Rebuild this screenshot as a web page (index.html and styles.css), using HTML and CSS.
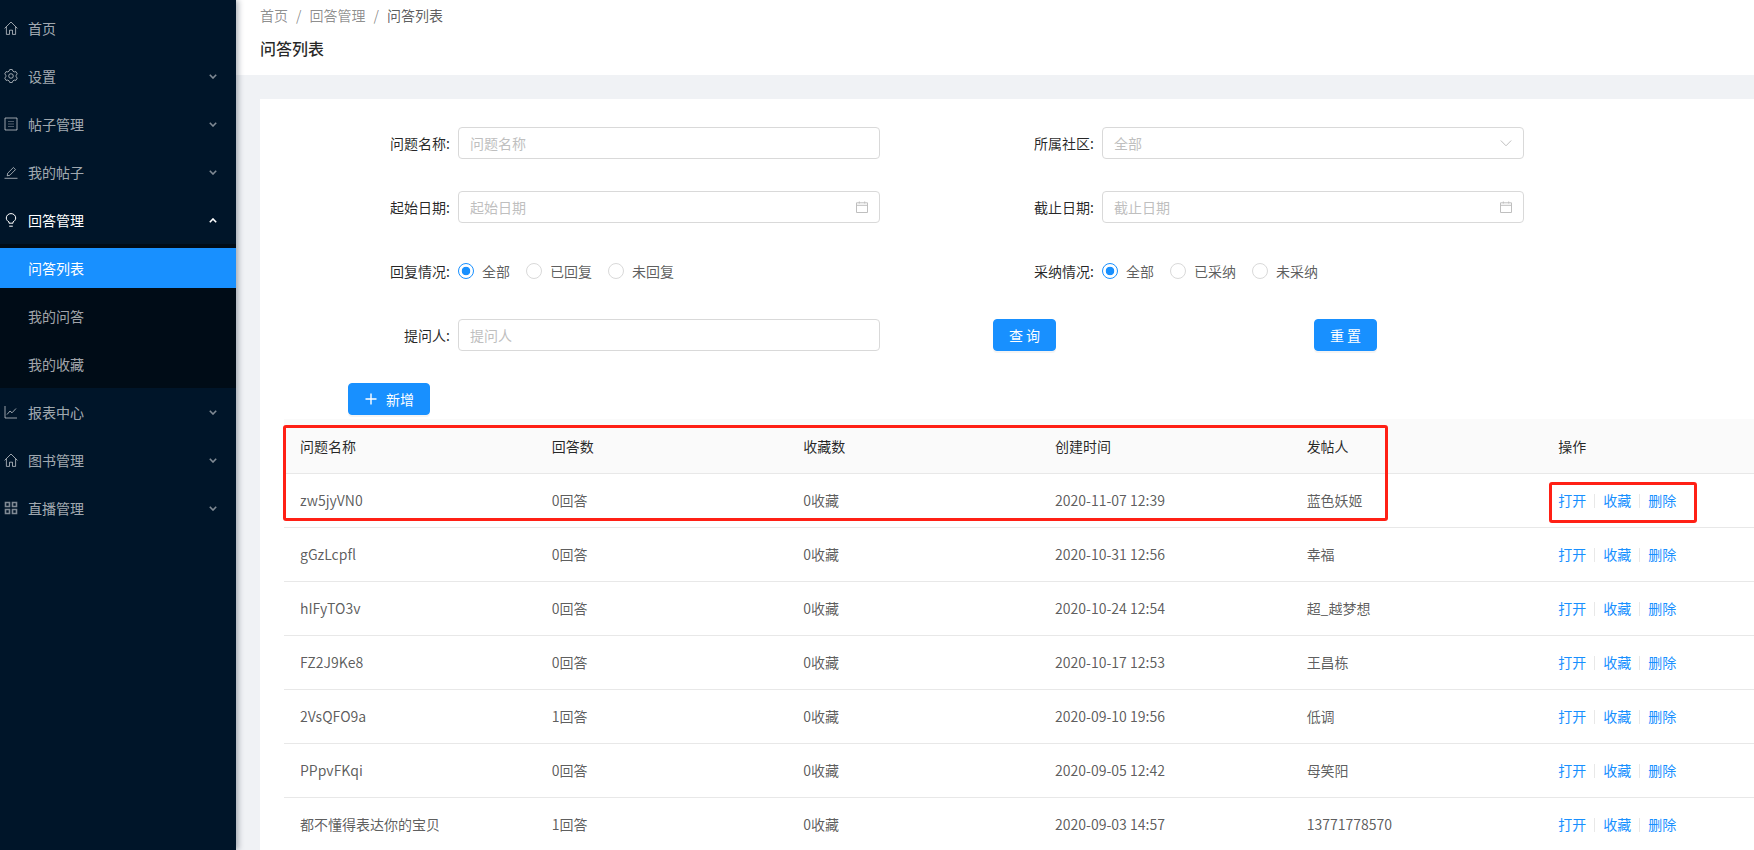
FILE: index.html
```html
<!DOCTYPE html>
<html lang="zh-CN">
<head>
  <meta charset="UTF-8">
  <meta name="viewport" content="width=device-width, initial-scale=1.0">
  <title>问答列表</title>
  <link rel="stylesheet" href="styles.css">
</head>
<body>
  <div class="layout">
    <!-- Sidebar -->
    <div class="sidebar">
      <div class="menu-item">
        <svg class="menu-icon" viewBox="0 0 14 14"><path d="M.6 7.4 7 1l6.4 6.4M2.4 5.8v7.6h3.1V9.2h3v4.2h3.1V5.8"/></svg>
        <span>首页</span>
      </div>
      <div class="menu-item">
        <svg class="menu-icon" viewBox="0 0 14 14"><path d="M5.74.52h2.52l.69 1.66 1.25.72 1.78-.23 1.26 2.18-1.09 1.43v1.44l1.09 1.43-1.26 2.18-1.78-.23-1.25.72-.69 1.66H5.74l-.69-1.66-1.25-.72-1.78.23L.76 9.15l1.09-1.43V6.28L.76 4.85l1.26-2.18 1.78.23 1.25-.72z"/><circle cx="7" cy="7" r="2.3"/></svg>
        <span>设置</span>
        <svg class="menu-arrow" viewBox="0 0 8 5"><path d="M.8.8 4 4l3.2-3.2"/></svg>
      </div>
      <div class="menu-item">
        <svg class="menu-icon" viewBox="0 0 14 14"><path d="M1 1h12v12H1z"/><path class="dim" d="M4 4.5h6M4 7h6M4 9.5h6"/></svg>
        <span>帖子管理</span>
        <svg class="menu-arrow" viewBox="0 0 8 5"><path d="M.8.8 4 4l3.2-3.2"/></svg>
      </div>
      <div class="menu-item">
        <svg class="menu-icon" viewBox="0 0 14 14"><path d="M.5 13.3h13M3.2 10.8l.5-2.6L9.4 2.5l2.1 2.1-5.7 5.7z"/></svg>
        <span>我的帖子</span>
        <svg class="menu-arrow" viewBox="0 0 8 5"><path d="M.8.8 4 4l3.2-3.2"/></svg>
      </div>
      <div class="menu-item menu-open">
        <svg class="menu-icon" viewBox="0 0 14 14"><path d="M5 10.2V8.9C3.4 8.100 2.300 6.700 2.300 5 2.300 2.500 4.400.6 7 .6s4.700 1.900 4.700 4.400c0 1.700-1.100 3.100-2.700 3.900v1.300zM5.200 13.200h3.600"/></svg>
        <span>回答管理</span>
        <svg class="menu-arrow" viewBox="0 0 8 5"><path d="M.8 4.200 4 1l3.200 3.200"/></svg>
      </div>
      <div class="submenu">
        <div class="submenu-item active">问答列表</div>
        <div class="submenu-item">我的问答</div>
        <div class="submenu-item">我的收藏</div>
      </div>
      <div class="menu-item">
        <svg class="menu-icon" viewBox="0 0 14 14"><path d="M1 1v12h12M3 9.500l3-3.500 2 1.800 4-4.300"/></svg>
        <span>报表中心</span>
        <svg class="menu-arrow" viewBox="0 0 8 5"><path d="M.8.8 4 4l3.200-3.200"/></svg>
      </div>
      <div class="menu-item">
        <svg class="menu-icon" viewBox="0 0 14 14"><path d="M.6 7.400 7 1l6.400 6.400M2.400 5.800v7.600h3.100V9.200h3v4.200h3.100V5.800"/></svg>
        <span>图书管理</span>
        <svg class="menu-arrow" viewBox="0 0 8 5"><path d="M.8.8 4 4l3.200-3.200"/></svg>
      </div>
      <div class="menu-item">
        <svg class="menu-icon" viewBox="0 0 14 14"><path class="thick" d="M1.500 1.500h4v4h-4zM8.500 1.500h4v4h-4zM1.500 8.500h4v4h-4zM8.500 8.500h4v4h-4z"/></svg>
        <span>直播管理</span>
        <svg class="menu-arrow" viewBox="0 0 8 5"><path d="M.8.8 4 4l3.200-3.200"/></svg>
      </div>
    </div>

    <!-- Main -->
    <div class="main">
      <div class="page-header">
        <div class="breadcrumb">
          <span>首页</span><i>/</i><span>回答管理</span><i>/</i><span class="current">问答列表</span>
        </div>
        <h1>问答列表</h1>
      </div>

      <div class="content">
        <div class="card">
          <form class="search-form">
            <div class="form-item">
              <label>问题名称:</label>
              <div class="field"><span class="placeholder">问题名称</span></div>
            </div>
            <div class="form-item">
              <label>所属社区:</label>
              <div class="field">
                <span class="placeholder">全部</span>
                <svg class="field-icon" viewBox="0 0 12 12"><path d="M.8 3.500 6 8.800l5.200-5.300"/></svg>
              </div>
            </div>
            <div class="form-item">
              <label>起始日期:</label>
              <div class="field">
                <span class="placeholder">起始日期</span>
                <svg class="field-icon" viewBox="0 0 12 12"><path d="M.5 1.800h11v9.700H.5zM.5 4.300h11M3.300.5v2M8.700.5v2"/></svg>
              </div>
            </div>
            <div class="form-item">
              <label>截止日期:</label>
              <div class="field">
                <span class="placeholder">截止日期</span>
                <svg class="field-icon" viewBox="0 0 12 12"><path d="M.5 1.800h11v9.700H.5zM.5 4.300h11M3.300.5v2M8.700.5v2"/></svg>
              </div>
            </div>
            <div class="form-item">
              <label>回复情况:</label>
              <div class="radio-group">
                <span class="radio checked"><b></b>全部</span>
                <span class="radio"><b></b>已回复</span>
                <span class="radio"><b></b>未回复</span>
              </div>
            </div>
            <div class="form-item">
              <label>采纳情况:</label>
              <div class="radio-group">
                <span class="radio checked"><b></b>全部</span>
                <span class="radio"><b></b>已采纳</span>
                <span class="radio"><b></b>未采纳</span>
              </div>
            </div>
            <div class="form-item">
              <label>提问人:</label>
              <div class="field"><span class="placeholder">提问人</span></div>
            </div>
            <div class="form-actions">
              <button type="button" class="btn">查 询</button>
              <button type="button" class="btn">重 置</button>
            </div>
          </form>

          <div class="toolbar">
            <button type="button" class="btn btn-add">
              <svg viewBox="0 0 14 14"><path d="M7 1.500v11M1.500 7h11"/></svg>
              新增
            </button>
          </div>

          <div class="table-wrap">
            <table class="list-table">
              <thead>
                <tr><th>问题名称</th><th>回答数</th><th>收藏数</th><th>创建时间</th><th>发帖人</th><th>操作</th></tr>
              </thead>
              <tbody>
                <tr>
                  <td>zw5jyVN0</td><td>0回答</td><td>0收藏</td><td>2020-11-07 12:39</td><td>蓝色妖姬</td>
                  <td class="actions"><a>打开</a><i></i><a>收藏</a><i></i><a>删除</a></td>
                </tr>
                <tr>
                  <td>gGzLcpfl</td><td>0回答</td><td>0收藏</td><td>2020-10-31 12:56</td><td>幸福</td>
                  <td class="actions"><a>打开</a><i></i><a>收藏</a><i></i><a>删除</a></td>
                </tr>
                <tr>
                  <td>hIFyTO3v</td><td>0回答</td><td>0收藏</td><td>2020-10-24 12:54</td><td>超_越梦想</td>
                  <td class="actions"><a>打开</a><i></i><a>收藏</a><i></i><a>删除</a></td>
                </tr>
                <tr>
                  <td>FZ2J9Ke8</td><td>0回答</td><td>0收藏</td><td>2020-10-17 12:53</td><td>王昌栋</td>
                  <td class="actions"><a>打开</a><i></i><a>收藏</a><i></i><a>删除</a></td>
                </tr>
                <tr>
                  <td>2VsQFO9a</td><td>1回答</td><td>0收藏</td><td>2020-09-10 19:56</td><td>低调</td>
                  <td class="actions"><a>打开</a><i></i><a>收藏</a><i></i><a>删除</a></td>
                </tr>
                <tr>
                  <td>PPpvFKqi</td><td>0回答</td><td>0收藏</td><td>2020-09-05 12:42</td><td>母笑阳</td>
                  <td class="actions"><a>打开</a><i></i><a>收藏</a><i></i><a>删除</a></td>
                </tr>
                <tr>
                  <td>都不懂得表达你的宝贝</td><td>1回答</td><td>0收藏</td><td>2020-09-03 14:57</td><td>13771778570</td>
                  <td class="actions"><a>打开</a><i></i><a>收藏</a><i></i><a>删除</a></td>
                </tr>
              </tbody>
            </table>
            <!-- red annotation boxes drawn over the table -->
            <div class="mark mark-row"></div>
            <div class="mark mark-actions"></div>
          </div>
        </div>
      </div>
    </div>
  </div>
</body>
</html>
```

FILE: styles.css
```css
html, body {
  margin: 0;
  padding: 0;
  height: 100%;
  overflow: hidden;
}

body {
  font-family: "Noto Sans CJK SC", "Noto Sans", sans-serif;
  font-size: 14px;
  color: rgba(0, 0, 0, 0.65);
  background-color: #f0f2f5;
}

.layout {
  display: flex;
  width: 1754px;
  height: 850px;
  overflow: hidden;
}

/* Sidebar */
.sidebar {
  flex: 0 0 236px;
  padding-top: 8px;
  background-color: #001529;
  box-shadow: 2px 0 6px rgba(0, 21, 41, 0.35);
  color: rgba(255, 255, 255, 0.65);
  position: relative;
  z-index: 2;
}

.menu-item {
  display: flex;
  align-items: center;
  height: 40px;
  margin-bottom: 8px;
  padding: 0 19px 0 4px;
}

.menu-item span {
  flex: 1;
  margin-left: 10px;
}

.menu-icon {
  width: 14px;
  height: 14px;
  fill: none;
  stroke: rgba(255, 255, 255, 0.6);
  stroke-width: 1;
}

.menu-icon .dim {
  stroke: rgba(255, 255, 255, 0.3);
  stroke-width: 1.2;
}

.menu-icon .thick {
  stroke-width: 1.6;
  stroke: rgba(255, 255, 255, 0.5);
}

.menu-arrow {
  width: 8px;
  height: 5px;
  fill: none;
  stroke: rgba(255, 255, 255, 0.5);
  stroke-width: 1.6;
}

.menu-open {
  margin-bottom: 4px;
  color: #fff;
}

.menu-open .menu-icon,
.menu-open .menu-arrow {
  stroke: #fff;
}

.submenu {
  height: 144px;
  margin-bottom: 4px;
  padding-top: 4px;
  box-sizing: border-box;
  background-color: #000c17;
}

.submenu-item {
  height: 40px;
  line-height: 40px;
  margin-bottom: 8px;
  padding-left: 28px;
}

.submenu-item.active {
  background-color: #1890ff;
  color: #fff;
}

/* Header */
.main {
  flex: 1;
  min-width: 0;
}

.page-header {
  height: 75px;
  box-sizing: border-box;
  padding: 4px 24px 0;
  background-color: #fff;
}

.breadcrumb {
  line-height: 22px;
  color: rgba(0, 0, 0, 0.45);
}

.breadcrumb i {
  font-style: normal;
  margin: 0 8px;
}

.breadcrumb .current {
  color: rgba(0, 0, 0, 0.65);
}

.page-header h1 {
  margin: 11px 0 0;
  font-size: 16px;
  font-weight: 500;
  line-height: 22px;
  color: rgba(0, 0, 0, 0.85);
}

/* Card */
.content {
  padding: 24px 0 0 24px;
}

.card {
  width: 1560px;
  height: 760px;
  box-sizing: border-box;
  padding-top: 28px;
  background-color: #fff;
}

.search-form {
  display: grid;
  grid-template-columns: 644px 644px;
  row-gap: 32px;
}

.form-item {
  display: flex;
  align-items: center;
  height: 32px;
}

.form-item label {
  flex: 0 0 190px;
  margin-right: 8px;
  text-align: right;
  color: rgba(0, 0, 0, 0.85);
}

.field {
  display: flex;
  align-items: center;
  justify-content: space-between;
  width: 422px;
  height: 32px;
  box-sizing: border-box;
  padding: 0 11px;
  border: 1px solid #d9d9d9;
  border-radius: 4px;
  background-color: #fff;
}

.placeholder {
  color: #bfbfbf;
}

.field-icon {
  width: 12px;
  height: 12px;
  fill: none;
  stroke: #bfbfbf;
  stroke-width: 1;
}

.radio-group {
  display: flex;
  align-items: center;
}

.radio {
  display: flex;
  align-items: center;
  margin-right: 16px;
}

.radio b {
  display: block;
  width: 16px;
  height: 16px;
  box-sizing: border-box;
  margin-right: 8px;
  border: 1px solid #d9d9d9;
  border-radius: 50%;
  background-color: #fff;
}

.radio.checked b {
  border-color: #1890ff;
  background: radial-gradient(circle, #1890ff 0, #1890ff 4px, #fff 4.6px);
}

.form-actions {
  display: flex;
  gap: 258px;
  padding-left: 89px;
}

.btn {
  height: 32px;
  padding: 0 15px;
  border: 1px solid #1890ff;
  border-radius: 4px;
  background-color: #1890ff;
  color: #fff;
  font-family: inherit;
  font-size: 14px;
  box-shadow: 0 2px 0 rgba(0, 0, 0, 0.045);
}

.form-actions .btn {
  width: 63px;
  padding: 0;
}

.toolbar {
  margin: 32px 0 4px 88px;
}

.btn-add {
  display: flex;
  align-items: center;
  width: 82px;
}

.btn-add svg {
  width: 14px;
  height: 14px;
  margin-right: 8px;
  fill: none;
  stroke: #fff;
  stroke-width: 1.4;
}

/* Table */
.table-wrap {
  position: relative;
  margin-left: 24px;
  width: 1510px;
}

.list-table {
  width: 100%;
  table-layout: fixed;
  border-collapse: collapse;
}

.list-table th,
.list-table td {
  height: 54px;
  box-sizing: border-box;
  padding: 0 16px;
  border-bottom: 1px solid #e8e8e8;
  text-align: left;
  white-space: nowrap;
}

.list-table th {
  background-color: #fafafa;
  font-weight: 400;
  color: rgba(0, 0, 0, 0.85);
}

.actions a {
  color: #1890ff;
}

.actions i {
  display: inline-block;
  width: 1px;
  height: 14px;
  margin: 0 8px;
  background-color: #e8e8e8;
  vertical-align: -2px;
}

.mark {
  position: absolute;
  box-sizing: border-box;
  border: 3px solid #ff2015;
  border-radius: 3px;
}

.mark-row {
  left: -1px;
  top: 6px;
  width: 1105px;
  height: 96px;
}

.mark-actions {
  left: 1265px;
  top: 63px;
  width: 148px;
  height: 41px;
}
```
